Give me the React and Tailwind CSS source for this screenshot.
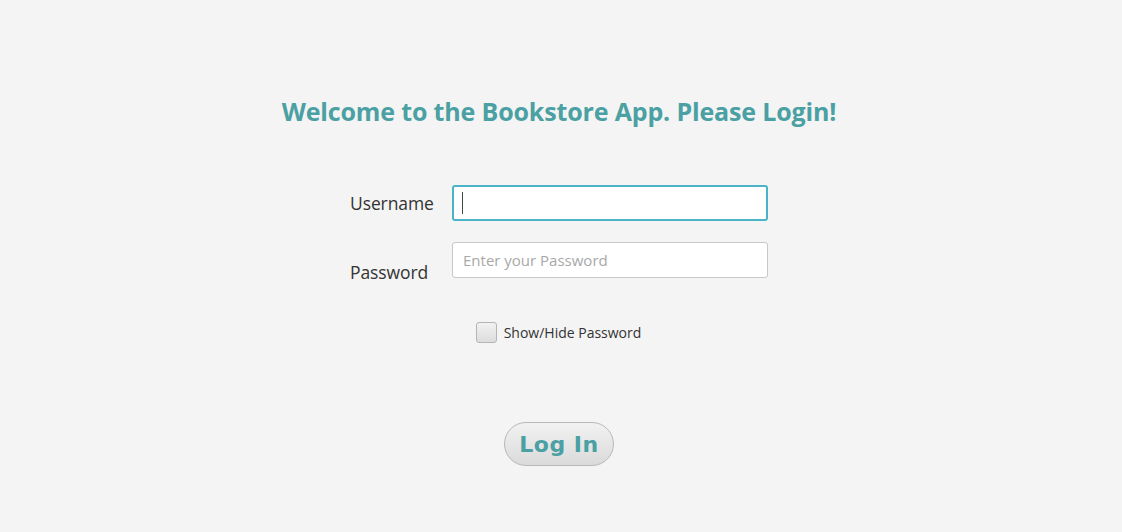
export default function App() {
  return (
    <div className="w-[1122px] h-[532px] bg-[#f4f4f4] flex flex-col items-center" style={{ fontFamily: '"Open Sans", "Noto Sans", sans-serif' }}>
      <h1 className="mt-[94px] ml-[-4px] text-[25px] leading-[34px] font-bold text-[#4aa0a2] tracking-[-0.15px]">
        Welcome to the Bookstore App. Please Login!
      </h1>
      <div className="mt-[57px] w-[418px] ml-[-4px] flex flex-col">
        <div className="flex items-center h-[36px]">
          <label className="w-[102px] text-[17.5px] text-[#333] tracking-[-0.1px]">Username</label>
          <div className="w-[316px] h-[36px] bg-white border-2 border-[#4bb3c7] rounded-[3px] flex items-center px-[8px]">
            <div className="w-[1px] h-[22px] bg-[#444]" />
          </div>
        </div>
        <div className="flex h-[36px] mt-[21px]">
          <label className="w-[102px] text-[17.5px] text-[#333] self-end leading-[24px] mb-[-6px] tracking-[-0.1px]">Password</label>
          <input
            className="w-[316px] h-[36px] bg-white border border-[#c8c8c8] rounded-[3px] px-[10px] text-[15px] outline-none placeholder:text-[#a8a8a8]"
            placeholder="Enter your Password"
          />
        </div>
      </div>
      <div className="mt-[44px] flex items-center gap-[7px] ml-[-5px]">
        <div className="w-[21px] h-[21px] border border-[#b5b5b5] rounded-[3px] bg-gradient-to-b from-[#f2f2f2] to-[#dcdcdc]" />
        <span className="text-[14px] text-[#333]">Show/Hide Password</span>
      </div>
      <button
        className="mt-[79px] ml-[-4px] w-[110px] h-[44px] rounded-full border border-[#b8b8b8] bg-gradient-to-b from-[#f2f2f2] to-[#dadada] text-[22px] font-bold text-[#4aa0a2] tracking-[0.5px]"
        style={{ fontFamily: '"DejaVu Sans", sans-serif' }}
      >
        Log In
      </button>
    </div>
  );
}
